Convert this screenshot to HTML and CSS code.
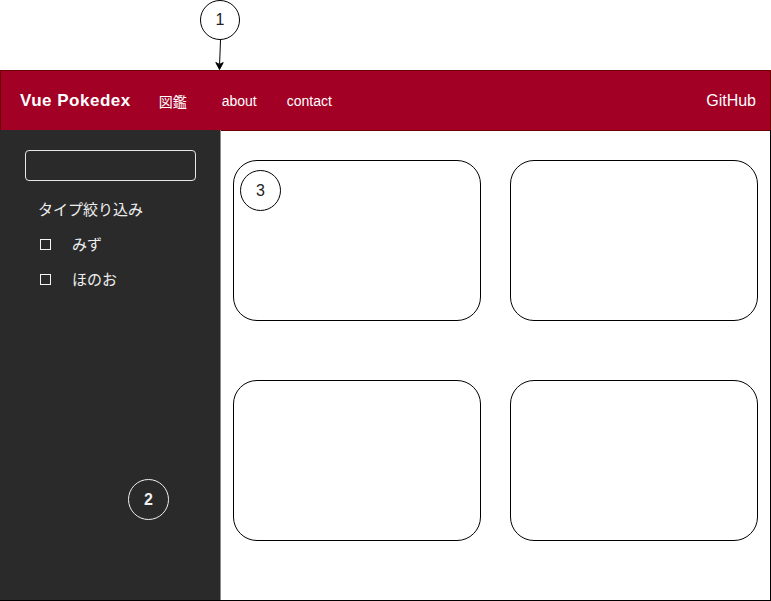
FILE: index.html
```html
<!DOCTYPE html>
<html lang="ja">
<head>
<meta charset="utf-8">
<title>Vue Pokedex</title>
<link rel="stylesheet" href="styles.css">
</head>
<body>
<div class="top">
  <div class="marker marker-dark">1</div>
  <svg class="arrow" width="12" height="30" viewBox="0 0 12 30">
    <line x1="6.5" y1="0" x2="5.6" y2="24" stroke="#000" stroke-width="1"/>
    <path d="M1.8 22.5 L5.5 29.5 L9.2 22.6 L5.5 24.4 Z" fill="#000" stroke="#000" stroke-width="1" stroke-linejoin="miter"/>
  </svg>
</div>
<header class="header">
  <span class="brand">Vue Pokedex</span>
  <span class="nav nav-zukan">図鑑</span>
  <span class="nav nav-about">about</span>
  <span class="nav nav-contact">contact</span>
  <span class="nav nav-github">GitHub</span>
</header>
<main class="main">
  <aside class="sidebar">
    <div class="search"></div>
    <div class="filter-title">タイプ絞り込み</div>
    <div class="check-row"><span class="box"></span><span class="label">みず</span></div>
    <div class="check-row"><span class="box"></span><span class="label">ほのお</span></div>
    <div class="marker marker-light">2</div>
  </aside>
  <section class="content">
    <div class="card"><div class="marker marker-dark">3</div></div>
    <div class="card"></div>
    <div class="card"></div>
    <div class="card"></div>
  </section>
</main>
</body>
</html>
```

FILE: styles.css
```css
* { box-sizing: border-box; }
html, body { margin: 0; padding: 0; background: #fff; }
body {
  width: 771px;
  height: 601px;
  overflow: hidden;
  font-family: "Liberation Sans", Arial, "Noto Sans CJK JP", sans-serif;
}
.top {
  height: 70px;
  display: flex;
  flex-direction: column;
  align-items: flex-start;
  padding-left: 200px;
}
.arrow { display: block; margin-left: 14px; }
.marker {
  width: 41px;
  height: 41px;
  border-radius: 50%;
  display: flex;
  align-items: center;
  justify-content: center;
  font-family: "Liberation Sans", Arial, sans-serif;
  font-size: 16px;
  line-height: 1;
  flex-shrink: 0;
}
.marker-dark {
  border: 1px solid #000;
  color: #222;
  background: #fff;
}
.top .marker-dark { width: 40px; height: 40px; }
.marker-light {
  border: 1px solid #f0f0f0;
  color: #f0f0f0;
  font-weight: bold;
  margin-top: auto;
  margin-bottom: 80px;
  margin-left: 103px;
}
.header {
  height: 61px;
  background: #a20025;
  border: 1px solid #6f0000;
  display: flex;
  align-items: center;
  padding: 0 14px 0 19px;
  color: #fff;
}
.brand { font-size: 17px; font-weight: bold; letter-spacing: 0.5px; }
.nav { font-size: 14px; }
.nav-zukan { margin-left: 28px; font-family: "Noto Sans CJK JP", sans-serif; font-size: 14px; }
.nav-about { margin-left: 35px; }
.nav-contact { margin-left: 30px; }
.nav-github { margin-left: auto; font-size: 16px; }
.main {
  display: flex;
  height: 471px;
  margin-top: -1px;
  border-right: 1px solid #000;
  border-bottom: 1px solid #000;
}
.sidebar {
  width: 221px;
  background: #2a2a2a;
  border-right: 1px solid #8a8a8a;
  padding: 20px 0 0 25px;
  display: flex;
  flex-direction: column;
  color: #eeeeee;
  font-family: "Noto Sans CJK JP", sans-serif;
  font-size: 15px;
}
.search {
  width: 171px;
  height: 31px;
  border: 1px solid #e6e6e6;
  border-radius: 4px;
}
.filter-title {
  margin: 18px 0 0 13px;
  height: 20px;
  line-height: 20px;
}
.check-row {
  display: flex;
  align-items: center;
  height: 20px;
  margin-top: 15px;
  margin-left: 15px;
}
.check-row:first-of-type { margin-top: 17px; }
.box {
  width: 11px;
  height: 11px;
  border: 1.5px solid #f4f4f4;
  margin-top: 1px;
}
.label { margin-left: 21px; line-height: 20px; }
.content {
  flex: 1;
  display: grid;
  grid-template-columns: 248px 248px;
  grid-template-rows: 161px 161px;
  column-gap: 29px;
  row-gap: 59px;
  padding: 30px 0 0 12px;
  align-content: start;
}
.card {
  border: 1px solid #000;
  border-radius: 24px;
  padding: 9px 0 0 6px;
}
```
